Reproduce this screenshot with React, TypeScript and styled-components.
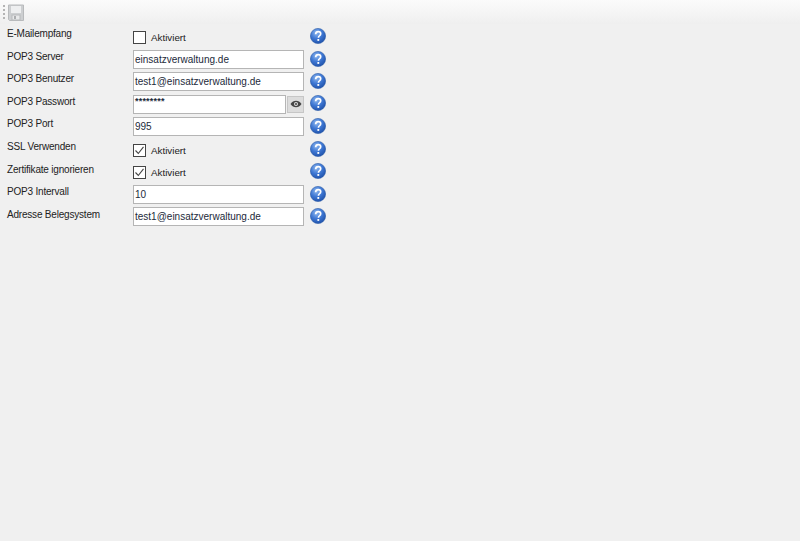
import React, { FunctionComponent } from 'react';
import styled, { createGlobalStyle } from 'styled-components';

const GlobalStyle = createGlobalStyle`
  html, body {
    margin: 0;
    padding: 0;
    background: #f0f0f0;
  }
  body {
    font-family: "Liberation Sans", Arial, sans-serif;
    width: 800px;
    height: 541px;
    overflow: hidden;
  }
`;

const Page = styled.div`
  width: 800px;
  height: 541px;
  background: #f0f0f0;
`;

const Toolbar = styled.div`
  height: 24px;
  display: flex;
  align-items: center;
  padding-left: 3px;
  gap: 3px;
  background: linear-gradient(#fbfbfb, #f4f4f4 60%, #efefef);
`;

const Grip = styled.div`
  width: 2px;
  height: 17px;
  background-image: radial-gradient(circle, #b4b4b4 1px, transparent 1px);
  background-size: 2px 4px;
`;

const Form = styled.div`
  display: flex;
  flex-direction: column;
  padding-top: 1.5px;
`;

const Row = styled.div`
  height: 22.5px;
  display: grid;
  grid-template-columns: 133px 171px 22px;
  column-gap: 0;
  align-items: center;
`;

const Label = styled.div<{ $nudge: number }>`
  font-size: 10px;
  letter-spacing: -0.2px;
  color: #222;
  padding-left: 7px;
  margin-top: ${p => p.$nudge}px;
  white-space: nowrap;
  line-height: 12px;
`;

const TextBox = styled.div`
  box-sizing: border-box;
  height: 19px;
  width: 171px;
  background: #fff;
  border: 1px solid #b5b5b5;
  font-size: 10px;
  color: #1c2a3a;
  padding-left: 1px;
  line-height: 17px;
  white-space: nowrap;
  overflow: hidden;
`;

const PasswordWrap = styled.div`
  display: flex;
  align-items: center;
  gap: 1px;
`;

const PasswordBox = styled(TextBox)`
  width: 153px;
  line-height: 11px;
  font-size: 9px;
  letter-spacing: 0.2px;
  font-weight: 700;
`;

const EyeButton = styled.div`
  box-sizing: border-box;
  width: 17px;
  height: 17px;
  background: #dcdcdc;
  border: 1px solid #c6c6c6;
  display: flex;
  align-items: center;
  justify-content: center;
`;

const CheckWrap = styled.div`
  display: flex;
  align-items: center;
  gap: 5px;
  margin-top: 2px;
  font-size: 9.8px;
  color: #222;
`;

const CheckBox = styled.div`
  box-sizing: border-box;
  width: 13px;
  height: 13px;
  background: #fff;
  border: 1px solid #444;
  display: flex;
  align-items: center;
  justify-content: center;
`;

const HelpCell = styled.div<{ $lifted: boolean }>`
  display: flex;
  justify-content: flex-end;
  margin-top: ${p => (p.$lifted ? -2 : -1)}px;
`;

const FloppyIcon = () => (
  <svg width="16" height="17" viewBox="0 0 16 17">
    <path d="M.5 1h15v15.500H1.500l-1-1z" fill="#cdcfd1" stroke="#b8babc" />
    <rect x="3" y="2" width="10" height="7" fill="#eeeff0" />
    <rect x="4" y="11" width="8" height="5" fill="#e8e9ea" stroke="#b8babc" />
    <rect x="6" y="12" width="2" height="3" fill="#acaeb0" />
  </svg>
);

const HelpIcon = () => (
  <svg width="16" height="16" viewBox="0 0 16 16">
    <defs>
      <radialGradient id="helpBlue" cx="40%" cy="30%" r="75%">
        <stop offset="0" stopColor="#8fb8ee" />
        <stop offset="0.5" stopColor="#3f78d4" />
        <stop offset="1" stopColor="#1d4fa8" />
      </radialGradient>
    </defs>
    <circle cx="8" cy="8" r="7.6" fill="url(#helpBlue)" stroke="#2a5aa8" strokeWidth="0.6" />
    <path
      d="M5.600 6.200C5.700 4.600 6.700 3.600 8.200 3.600c1.500 0 2.500.9 2.500 2.200 0 1-.6 1.600-1.300 2.100-.6.4-.9.8-.9 1.500v.4"
      fill="none"
      stroke="#fff"
      strokeWidth="1.7"
    />
    <rect x="7.400" y="11" width="1.800" height="1.900" fill="#fff" />
  </svg>
);

const EyeIcon = () => (
  <svg width="12" height="8" viewBox="0 0 12 8">
    <path d="M.5 4C2 1.600 3.900.8 6 .8S10 1.600 11.500 4C10 6.400 8.100 7.200 6 7.200S2 6.400.5 4z" fill="#444" />
    <circle cx="6" cy="4" r="2" fill="#dcdcdc" />
    <circle cx="6" cy="4" r="1" fill="#444" />
  </svg>
);

const CheckMark = () => (
  <svg width="11" height="11" viewBox="0 0 11 11">
    <path d="M1.500 5.500l2.800 3L9.500 1.800" fill="none" stroke="#444" strokeWidth="1.100" />
  </svg>
);

interface Setting {
  label: string;
  nudge: number;
  kind: 'text' | 'check' | 'password';
  value?: string;
  checked?: boolean;
}

const settings: Setting[] = [
  { label: 'E-Mailempfang', nudge: -5, kind: 'check', checked: false },
  { label: 'POP3 Server', nudge: -5, kind: 'text', value: 'einsatzverwaltung.de' },
  { label: 'POP3 Benutzer', nudge: -5, kind: 'text', value: 'test1@einsatzverwaltung.de' },
  { label: 'POP3 Passwort', nudge: -5, kind: 'password', value: '********' },
  { label: 'POP3 Port', nudge: -5, kind: 'text', value: '995' },
  { label: 'SSL Verwenden', nudge: -4, kind: 'check', checked: true },
  { label: 'Zertifikate ignorieren', nudge: -4, kind: 'check', checked: true },
  { label: 'POP3 Intervall', nudge: -5, kind: 'text', value: '10' },
  { label: 'Adresse Belegsystem', nudge: -4, kind: 'text', value: 'test1@einsatzverwaltung.de' }
];

const Field: FunctionComponent<{ setting: Setting }> = ({ setting }) => {
  if (setting.kind === 'check') {
    return (
      <CheckWrap>
        <CheckBox>{setting.checked && <CheckMark />}</CheckBox>
        Aktiviert
      </CheckWrap>
    );
  }
  if (setting.kind === 'password') {
    return (
      <PasswordWrap>
        <PasswordBox>{setting.value}</PasswordBox>
        <EyeButton>
          <EyeIcon />
        </EyeButton>
      </PasswordWrap>
    );
  }
  return <TextBox>{setting.value}</TextBox>;
};

const App: FunctionComponent = () => (
  <Page>
    <GlobalStyle />
    <Toolbar>
      <Grip />
      <FloppyIcon />
    </Toolbar>
    <Form>
      {settings.map(setting => (
        <Row key={setting.label}>
          <Label $nudge={setting.nudge}>{setting.label}</Label>
          <Field setting={setting} />
          <HelpCell $lifted={setting.kind === 'password'}>
            <HelpIcon />
          </HelpCell>
        </Row>
      ))}
    </Form>
  </Page>
);

export default App;
